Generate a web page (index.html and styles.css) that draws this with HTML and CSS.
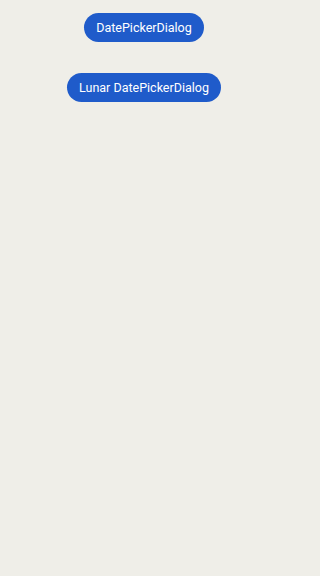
FILE: index.html
```html
<!DOCTYPE html>
<html>
<head>
<meta charset="utf-8">
<link rel="stylesheet" href="styles.css">
</head>
<body>
<main class="page">
  <button class="btn">DatePickerDialog</button>
  <button class="btn">Lunar DatePickerDialog</button>
</main>
</body>
</html>
```
FILE: styles.css
```css
html, body {
  margin: 0;
  padding: 0;
  background: #efeee8;
  height: 100%;
}
.page {
  width: 288px;
  display: flex;
  flex-direction: column;
  align-items: center;
  gap: 31px;
  padding-top: 13px;
}
.btn {
  height: 29px;
  padding: 0 12px;
  border: none;
  border-radius: 15px;
  background: #1f5bca;
  color: #ffffff;
  font-family: Roboto, "Noto Sans", sans-serif;
  font-size: 12.5px;
  line-height: 29px;
  cursor: pointer;
}
```
